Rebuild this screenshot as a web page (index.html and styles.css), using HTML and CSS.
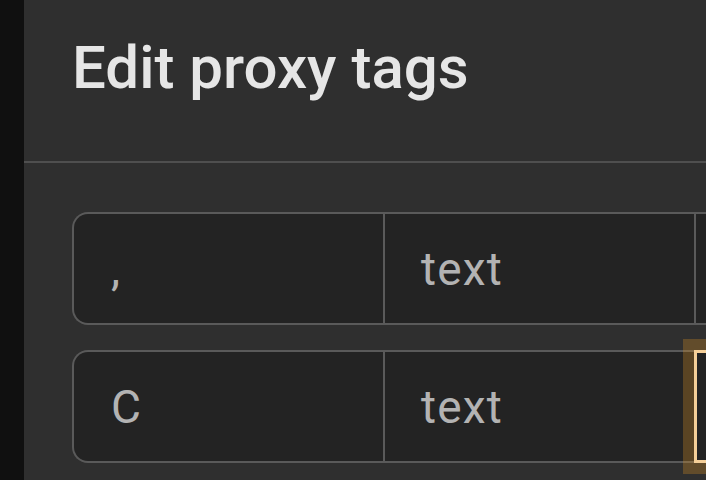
FILE: index.html
```html
<!DOCTYPE html>
<html>
<head>
<meta charset="utf-8">
<link rel="stylesheet" href="styles.css">
</head>
<body>
<div class="app">
  <div class="rail"></div>
  <div class="panel">
    <header class="header">
      <h1 class="title">Edit proxy tags</h1>
    </header>
    <div class="content">
      <div class="row">
        <div class="cell first">,</div>
        <div class="cell">text</div>
        <div class="cell last"></div>
      </div>
      <div class="row">
        <div class="cell first">C</div>
        <div class="cell">text</div>
        <div class="cell last focused"></div>
      </div>
    </div>
  </div>
</div>
</body>
</html>
```

FILE: styles.css
```css
html, body {
  margin: 0;
  padding: 0;
  width: 706px;
  height: 480px;
  overflow: hidden;
  background: #101010;
  font-family: Roboto, "Liberation Sans", sans-serif;
}
.app {
  display: flex;
  width: 706px;
  height: 480px;
}
.rail {
  width: 24px;
  flex: none;
  background: #101010;
}
.panel {
  flex: 1;
  background: #2f2f2f;
  display: flex;
  flex-direction: column;
  min-width: 0;
  overflow: hidden;
}
.header {
  height: 163px;
  box-sizing: border-box;
  border-bottom: 2px solid #4f4f4f;
  padding-left: 48px;
  display: flex;
  align-items: flex-start;
}
.title {
  margin: 0;
  margin-top: 30px;
  font-size: 60px;
  line-height: 76px;
  font-weight: 500;
  color: #e6e6e6;
  white-space: nowrap;
}
.content {
  padding: 49px 0 0 48px;
  display: flex;
  flex-direction: column;
  gap: 25px;
}
.row {
  display: flex;
  height: 113px;
  box-sizing: border-box;
  border: 2px solid #5a5a5a;
  border-right: none;
  border-radius: 16px 0 0 16px;
  background: #232323;
  width: 700px;
  flex: none;
}
.cell {
  width: 311px;
  flex: none;
  box-sizing: border-box;
  border-right: 2px solid #5a5a5a;
  padding-left: 36px;
  display: flex;
  align-items: center;
  font-size: 46px;
  letter-spacing: 1.2px;
  color: #b3b3b3;
}
.cell.first {
  padding-left: 37px;
}
.cell.last {
  border-right: none;
  position: relative;
}
.cell.focused::after {
  content: "";
  position: absolute;
  left: -2px;
  top: -2px;
  bottom: -2px;
  width: 200px;
  border: 3px solid #f5cf98;
  box-shadow: 0 0 0 11px rgba(220, 145, 35, 0.3);
  box-sizing: border-box;
}
```
